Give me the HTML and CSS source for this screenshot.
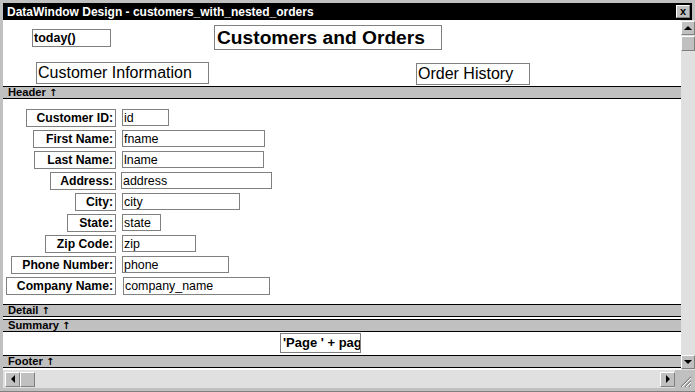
FILE: index.html
```html
<!DOCTYPE html>
<html lang="en">
<head>
	<meta charset="UTF-8">
	<title>DataWindow Design - customers_with_nested_orders</title>
	<link rel="stylesheet" href="styles.css">
</head>
<body>
  <div class="window">
    <div class="titlebar">
      <span class="title">DataWindow Design - customers_with_nested_orders</span>
      <span class="close">x</span>
    </div>
    <div class="main">
      <div class="canvas">
        <div class="area header-area">
          <div class="hrow1">
            <div class="obj today">today()</div>
            <div class="obj heading">Customers and Orders</div>
          </div>
          <div class="hrow2">
            <div class="obj sub cust-info">Customer Information</div>
            <div class="obj sub order-hist">Order History</div>
          </div>
        </div>
        <div class="band">Header <span class="arr">&#8593;</span></div>

        <div class="area detail-area">
          <div class="row"><div class="lbl lw-id">Customer ID:</div><div class="fld fw-id">id</div></div>
          <div class="row"><div class="lbl lw-fname">First Name:</div><div class="fld fw-fname">fname</div></div>
          <div class="row"><div class="lbl lw-lname">Last Name:</div><div class="fld fw-lname">lname</div></div>
          <div class="row"><div class="lbl lw-addr">Address:</div><div class="fld fw-addr">address</div></div>
          <div class="row"><div class="lbl lw-city">City:</div><div class="fld fw-city">city</div></div>
          <div class="row"><div class="lbl lw-state">State:</div><div class="fld fw-state">state</div></div>
          <div class="row"><div class="lbl lw-zip">Zip Code:</div><div class="fld fw-zip">zip</div></div>
          <div class="row"><div class="lbl lw-phone">Phone Number:</div><div class="fld fw-phone">phone</div></div>
          <div class="row"><div class="lbl lw-comp">Company Name:</div><div class="fld fw-comp">company_name</div></div>
        </div>
        <div class="band">Detail <span class="arr">&#8593;</span></div>
        <div class="gap2"></div>
        <div class="band">Summary <span class="arr">&#8593;</span></div>
        <div class="area summary-area">
          <div class="obj pageno">'Page ' + pag</div>
        </div>
        <div class="band">Footer <span class="arr">&#8593;</span></div>
        <div class="gap3"></div>
      </div>
      <div class="vscroll">
        <div class="btn"><span class="tri-up"></span></div>
        <div class="btn thumb"></div>
        <div class="track"></div>
        <div class="btn"><span class="tri-down"></span></div>
      </div>
    </div>
    <div class="bottom">
      <div class="hscroll">
        <div class="btn"><span class="tri-left"></span></div>
        <div class="btn thumb"></div>
        <div class="track"></div>
        <div class="btn"><span class="tri-right"></span></div>
      </div>
      <div class="grip">
        <svg width="14" height="14" viewBox="0 0 14 14">
          <path d="M13 3 L3 13 M13 7 L7 13 M13 11 L11 13" stroke="#808080" stroke-width="1.2"/>
          <path d="M13 4 L4 13 M13 8 L8 13 M13 12 L12 13" stroke="#fff" stroke-width="1"/>
        </svg>
      </div>
    </div>
  </div>
</body>
</html>
```
FILE: styles.css
```css
body{margin:0;padding:0;font-family:"Liberation Sans",Arial,sans-serif;}
.window{
  width:695px;
  height:392px;
  box-sizing:border-box;
  padding:3px 3px 3px 3px;
  background:#c0c0c0;
  border-bottom:1px solid #808080;
  display:flex;
  flex-direction:column;
}
.titlebar{
  height:17px;
  background:#000;
  color:#fff;
  display:flex;
  align-items:center;
  justify-content:space-between;
  padding:0 2px 0 4px;
}
.title{font-weight:bold;font-size:12px;}
.close{
  width:12px;
  height:11px;
  background:#c0c0c0;
  color:#000;
  font-weight:bold;
  font-size:11px;
  line-height:10px;
  text-align:center;
  border-top:1px solid #fff;
  border-left:1px solid #fff;
  border-right:1px solid #808080;
  border-bottom:1px solid #808080;
}
.main{flex:1;display:flex;min-height:0;}
.canvas{
  flex:1;
  background:#fff;
  display:flex;
  flex-direction:column;
  font-size:12px;
}
.obj{border:1px solid #808080;box-sizing:border-box;white-space:nowrap;overflow:hidden;}
.header-area{height:66px;box-sizing:border-box;padding-top:5px;}
.hrow1{display:flex;align-items:flex-start;}
.today{
  margin:4px 0 0 29px;
  width:79px;
  height:18px;
  font-weight:bold;
  font-size:12.5px;
  line-height:16px;
  padding-left:1px;
}
.heading{
  margin-left:103px;
  width:228px;
  height:25px;
  font-weight:bold;
  font-size:19.2px;
  line-height:23px;
  padding-left:2px;
}
.hrow2{display:flex;margin-top:12px;}
.sub{font-size:16px;height:22px;line-height:20px;padding-left:1px;}
.cust-info{margin-left:33px;width:173px;}
.order-hist{margin-left:207px;width:114px;height:22px;margin-top:1px;}
.band{
  height:11px;
  background:#c0c0c0;
  border-top:1px solid #000;
  border-bottom:1px solid #000;
  font-weight:bold;
  font-size:11.2px;
  line-height:11px;
  padding-left:5px;
}
.band .arr{font-family:"DejaVu Sans",sans-serif;font-size:10px;}
.detail-area{
  height:205px;
  box-sizing:border-box;
  padding-top:10px;
  display:flex;
  flex-direction:column;
  gap:3px;
}
.row{display:flex;height:18px;width:678px;}
.row .lbl{
  box-sizing:border-box;
  border:1px solid #808080;
  height:18px;
  font-weight:bold;
  font-size:12.2px;
  line-height:17px;
  text-align:right;
  padding-right:2px;
  white-space:nowrap;
}
.row .fld{
  margin-left:6px;
  box-sizing:border-box;
  border:1px solid #808080;
  height:17px;
  font-size:12.4px;
  line-height:16px;
  padding-left:1px;
  white-space:nowrap;
}
.lw-id{width:90px;margin-left:23px;}
.lw-fname{width:83px;margin-left:30px;}
.lw-lname{width:82px;margin-left:31px;}
.lw-addr{width:66px;margin-left:47px;}
.lw-city{width:41px;margin-left:72px;}
.lw-state{width:49px;margin-left:64px;}
.lw-zip{width:71px;margin-left:42px;}
.lw-phone{width:105px;margin-left:8px;}
.lw-comp{width:110px;margin-left:3px;}
.fw-id{width:47px;}
.fw-fname{width:143px;}
.fw-lname{width:142px;}
.row .fw-addr{width:151px;margin-left:5px;}
.fw-city{width:118px;}
.fw-state{width:39px;}
.fw-zip{width:74px;}
.fw-phone{width:107px;}
.row .fw-comp{width:147px;margin-left:7px;height:18px;}
.gap2{height:2px;}
.summary-area{height:23px;box-sizing:border-box;padding-top:1px;}
.pageno{
  margin-left:277px;
  width:81px;
  height:20px;
  font-size:13px;
  line-height:18px;
  padding-left:2px;
  font-weight:bold;
}
.gap3{flex:1;}
.vscroll{
  width:16px;
  background:#e0e0e0;
  display:flex;
  flex-direction:column;
  align-items:flex-start;
}
.btn{
  width:12px;
  height:12px;
  background:#c0c0c0;
  border-top:1px solid #fff;
  border-left:1px solid #fff;
  border-right:1px solid #808080;
  border-bottom:1px solid #808080;
  display:flex;
  align-items:center;
  justify-content:center;
  flex:none;
}
.vscroll .btn{margin:1px 0 1px 0;}
.vscroll .thumb{height:13px;margin-top:0;}
.track{flex:1;}
.tri-up{border-left:4px solid transparent;border-right:4px solid transparent;border-bottom:4px solid #000;}
.tri-down{border-left:4px solid transparent;border-right:4px solid transparent;border-top:4px solid #000;}
.tri-left{border-top:4px solid transparent;border-bottom:4px solid transparent;border-right:4px solid #000;}
.tri-right{border-top:4px solid transparent;border-bottom:4px solid transparent;border-left:4px solid #000;}
.bottom{height:18px;display:flex;}
.hscroll{
  flex:1;
  background:#e0e0e0;
  display:flex;
  align-items:center;
  padding-left:2px;
}
.hscroll .btn{width:13px;height:13px;}
.grip{width:17px;display:flex;align-items:flex-end;justify-content:flex-end;}
```
